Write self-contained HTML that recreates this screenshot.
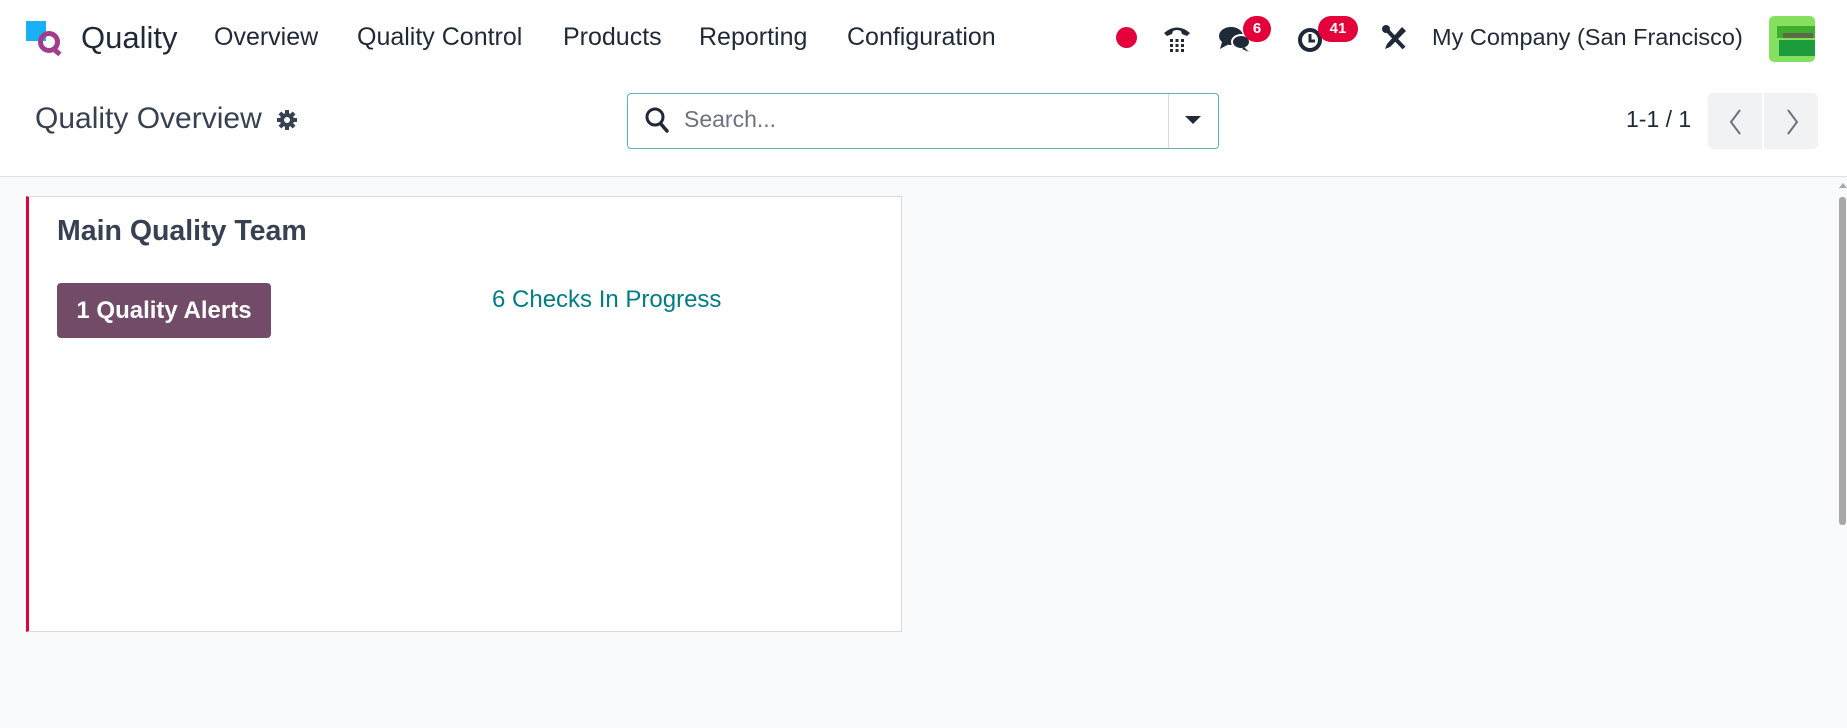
<!DOCTYPE html>
<html><head><meta charset="utf-8"><style>
*{box-sizing:border-box;margin:0;padding:0}
body{width:1847px;height:728px;overflow:hidden;background:#f9fafb;font-family:"Liberation Sans",sans-serif;color:#1f2937;position:relative}
.top{position:absolute;left:0;top:0;width:1847px;height:177px;background:#fff;border-bottom:1px solid #dee2e6}
.a{position:absolute;white-space:nowrap}
.nav{top:23px;font-size:25px;color:#1f2937}
.badge{position:absolute;background:#e4003a;color:#fff;font-size:15px;font-weight:bold;border-radius:14px;height:26px;line-height:26px;text-align:center}
</style></head><body>
<div class="top">
 <div class="a" style="left:26px;top:21px;width:20px;height:20px;background:#1ab0f5"></div>
 <div class="a" style="left:38px;top:31px;width:22px;height:22px;border:5px solid #a23d8c;border-radius:50%"></div>
 <div class="a" style="left:52px;top:49px;width:9px;height:5px;background:#a23d8c;transform:rotate(40deg)"></div>
 <div class="a" style="left:81px;top:20px;font-size:31px;color:#1f2937">Quality</div>
 <div class="a nav" style="left:214px">Overview</div>
 <div class="a nav" style="left:357px">Quality Control</div>
 <div class="a nav" style="left:563px">Products</div>
 <div class="a nav" style="left:699px">Reporting</div>
 <div class="a nav" style="left:847px">Configuration</div>
 <div class="a" style="left:1116px;top:27px;width:21px;height:21px;border-radius:50%;background:#e4003a"></div>
 <svg class="a" style="left:1161px;top:22px" width="32" height="32" viewBox="0 0 32 32"><path d="M3 11 Q16 0 29 11 L26 14 L21 12 L20 9 Q16 7 12 9 L11 12 L6 14Z" fill="#1f2937"/><g fill="#1f2937"><rect x="9" y="17" width="3" height="3"/><rect x="14.5" y="17" width="3" height="3"/><rect x="20" y="17" width="3" height="3"/><rect x="9" y="22" width="3" height="3"/><rect x="14.5" y="22" width="3" height="3"/><rect x="20" y="22" width="3" height="3"/><rect x="9" y="27" width="3" height="3"/><rect x="14.5" y="27" width="3" height="3"/><rect x="20" y="27" width="3" height="3"/></g></svg>
 <svg class="a" style="left:1218px;top:24px" width="34" height="30" viewBox="0 0 34 30"><ellipse cx="13" cy="12" rx="12" ry="9" fill="#1f2937"/><path d="M4 18 L2 25 L11 20Z" fill="#1f2937"/><ellipse cx="23" cy="18" rx="9" ry="7" fill="#1f2937" stroke="#fff" stroke-width="2"/><path d="M26 23 L31 28 L24 25Z" fill="#1f2937"/></svg>
 <div class="badge" style="left:1243px;top:16px;width:28px">6</div>
 <svg class="a" style="left:1296px;top:24px" width="30" height="30" viewBox="0 0 30 30"><circle cx="14" cy="16" r="10" fill="none" stroke="#1f2937" stroke-width="4"/><path d="M14 10 V17 H19" fill="none" stroke="#1f2937" stroke-width="3"/></svg>
 <div class="badge" style="left:1318px;top:16px;width:40px">41</div>
 <svg class="a" style="left:1381px;top:24px" width="28" height="28" viewBox="0 0 28 28"><path d="M5 5 L23 24" stroke="#1f2937" stroke-width="4"/><circle cx="5" cy="5" r="4" fill="#1f2937"/><path d="M21 3 L25 7 L9 23 L4 25 L6 20Z" fill="#1f2937"/></svg>
 <div class="a nav" style="left:1432px;font-size:23.5px;top:24px">My Company (San Francisco)</div>
 <div class="a" style="left:1769px;top:16px;width:46px;height:46px;border-radius:5px;background:#86e060;overflow:hidden"><div style="position:absolute;left:8px;top:10px;width:38px;height:12px;background:#3fae2f"></div><div style="position:absolute;left:10px;top:24px;width:36px;height:16px;background:#1d9c3c"></div><div style="position:absolute;left:14px;top:17px;width:30px;height:5px;background:#5c6b45"></div></div>
 <div class="a" style="left:35px;top:102px;font-size:30px;color:#374151">Quality Overview</div>
 <svg class="a" style="left:276px;top:109px" width="22" height="22" viewBox="0 0 22 22"><g fill="#374151"><circle cx="11" cy="11" r="7"/><rect x="9" y="1" width="4" height="20"/><rect x="1" y="9" width="20" height="4"/><rect x="9" y="1" width="4" height="20" transform="rotate(45 11 11)"/><rect x="9" y="1" width="4" height="20" transform="rotate(-45 11 11)"/></g><circle cx="11" cy="11" r="3" fill="#fff"/></svg>
 <div class="a" style="left:627px;top:93px;width:592px;height:56px;border:1px solid #5fb3b3;border-radius:4px"></div>
 <div class="a" style="left:1168px;top:94px;width:1px;height:54px;background:#d8dadd"></div>
 <svg class="a" style="left:644px;top:106px" width="26" height="28" viewBox="0 0 26 28"><circle cx="11" cy="11" r="8" fill="none" stroke="#1f2937" stroke-width="3"/><path d="M17 18 L23 25" stroke="#1f2937" stroke-width="3.5" stroke-linecap="round"/></svg>
 <div class="a" style="left:684px;top:106px;font-size:23px;color:#6b7280">Search...</div>
 <div class="a" style="left:1185px;top:116px;width:0;height:0;border-left:8px solid transparent;border-right:8px solid transparent;border-top:8px solid #1f2937"></div>
 <div class="a" style="left:1626px;top:106px;font-size:23px;color:#1f2937">1-1 / 1</div>
 <div class="a" style="left:1708px;top:93px;width:54px;height:56px;background:#f1f2f4;border-radius:5px 0 0 5px"></div>
 <div class="a" style="left:1764px;top:93px;width:54px;height:56px;background:#f1f2f4;border-radius:0 5px 5px 0"></div>
 <svg class="a" style="left:1726px;top:107px" width="20" height="30" viewBox="0 0 20 30"><path d="M14 3 L5 15 L14 27" fill="none" stroke="#6b7280" stroke-width="2"/></svg>
 <svg class="a" style="left:1782px;top:107px" width="20" height="30" viewBox="0 0 20 30"><path d="M6 3 L15 15 L6 27" fill="none" stroke="#6b7280" stroke-width="2"/></svg>
</div>
<div class="a" style="left:26px;top:196px;width:876px;height:436px;background:#fff;border:1px solid #d8dadd;border-left:3px solid #e4003a"></div>
<div class="a" style="left:57px;top:215px;font-size:28.5px;font-weight:bold;color:#374151">Main Quality Team</div>
<div class="a" style="left:57px;top:283px;width:214px;height:55px;background:#714b67;border-radius:4px;color:#fff;font-size:24px;font-weight:bold;line-height:55px;text-align:center">1 Quality Alerts</div>
<div class="a" style="left:492px;top:286px;font-size:24px;color:#017e84">6 Checks In Progress</div>
<div class="a" style="left:1839px;top:197px;width:7px;height:328px;background:#a8a8a8;border-radius:3px"></div>
<div class="a" style="left:1839px;top:183px;width:0;height:0;border-left:4px solid transparent;border-right:4px solid transparent;border-bottom:5px solid #a8a8a8"></div>
</body></html>
